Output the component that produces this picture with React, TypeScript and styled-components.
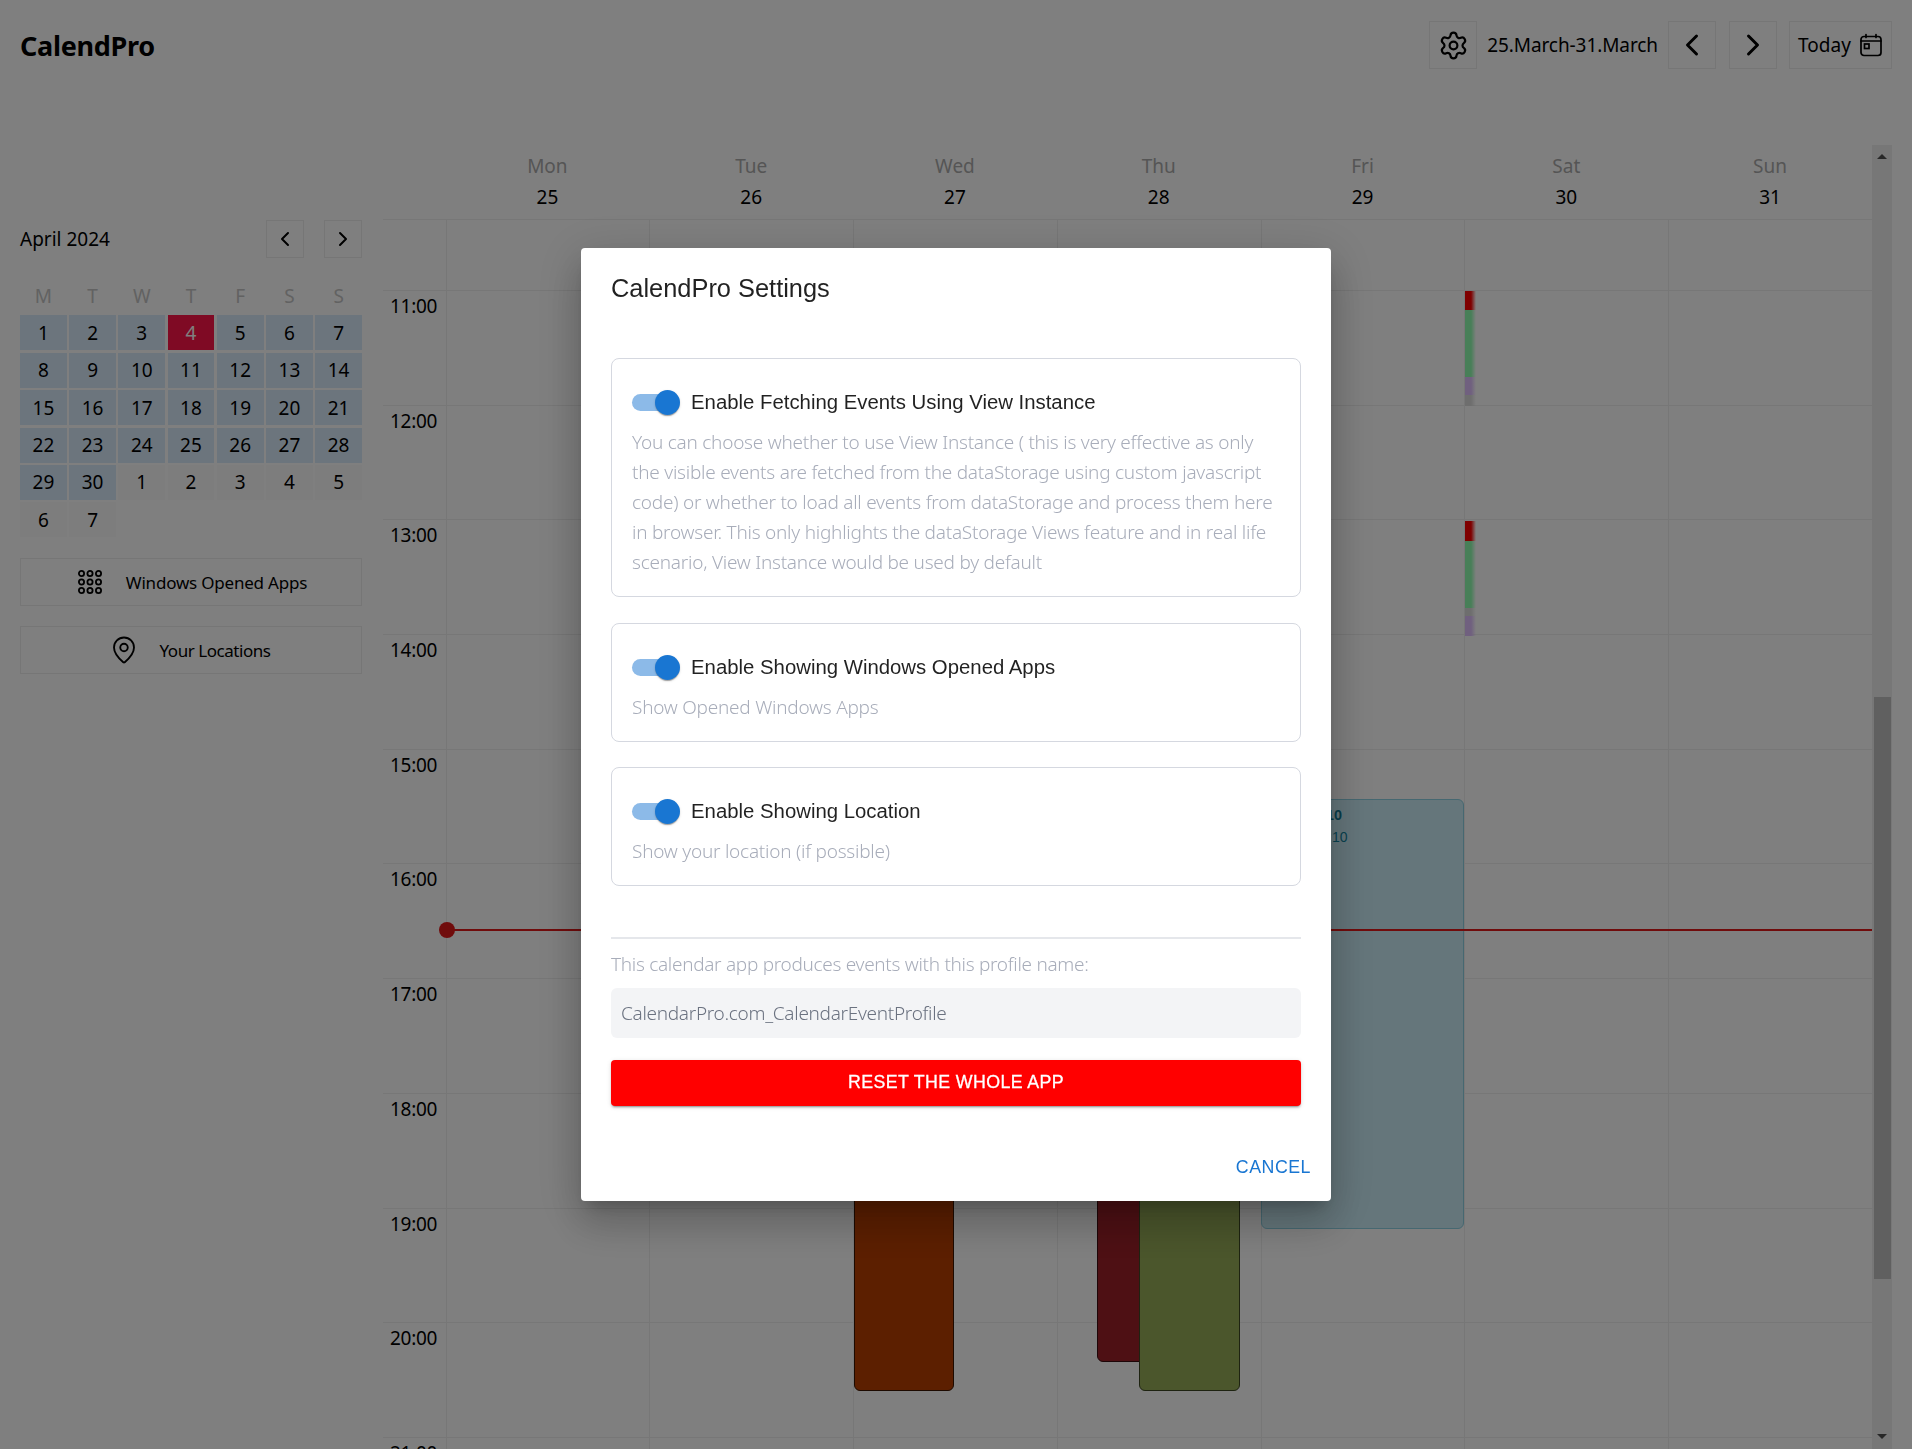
import React from 'react';
import styled, { createGlobalStyle } from 'styled-components';
import { ChevronLeft, ChevronRight, MapPin, Settings } from 'lucide-react';

const SEGOE = `'Noto Sans', 'Open Sans', sans-serif`;
const ARIAL = `'Liberation Sans', Arial, sans-serif`;

const GlobalStyle = createGlobalStyle`
  html, body {
    margin: 0;
    padding: 0;
    background: #fff;
  }
  * {
    box-sizing: border-box;
  }
`;

const Page = styled.div`
  width: 1912px;
  height: 1449px;
  overflow: hidden;
  background: #fff;
  color: #000;
  font-family: ${SEGOE};
`;

const Header = styled.header`
  display: flex;
  align-items: center;
  height: 145px;
  padding: 21px 20px 76px 20px;
`;

const Logo = styled.h1`
  flex: 1;
  margin: 0;
  font-size: 27px;
  font-weight: 700;
  letter-spacing: -0.3px;
`;

const IconButton = styled.button<{ $wide?: boolean }>`
  display: flex;
  align-items: center;
  justify-content: center;
  gap: 8px;
  width: ${({ $wide }) => ($wide ? '103px' : '48px')};
  height: 48px;
  margin-left: ${({ $wide }) => ($wide ? '12px' : '0')};
  padding: 0;
  border: 1px solid #ececec;
  background: transparent;
  color: #000;
  font-family: ${SEGOE};
  font-size: 19px;
`;

const NextButton = styled(IconButton)`
  margin-left: 13px;
`;

const RangeLabel = styled.span`
  margin: 0 10px;
  font-size: 19px;
  letter-spacing: -0.08px;
`;

const Main = styled.main`
  display: flex;
  height: 1304px;
  padding-right: 20px;
`;

const Sidebar = styled.aside`
  flex: 0 0 383px;
  padding: 75px 21px 0 20px;
`;

const MonthBar = styled.div`
  display: flex;
  align-items: center;
  height: 38px;
  font-size: 19px;
`;

const MonthName = styled.span`
  flex: 1;
`;

const MonthButton = styled.button`
  display: flex;
  align-items: center;
  justify-content: center;
  width: 38px;
  height: 38px;
  margin-left: 20px;
  padding: 0;
  border: 1px solid #ececec;
  background: transparent;
  color: #000;
`;

const MonthGrid = styled.div`
  display: grid;
  grid-template-columns: repeat(7, 1fr);
  grid-auto-rows: 35px;
  column-gap: 2.4px;
  row-gap: 2.4px;
  margin-top: 20px;
`;

const WeekdayCell = styled.div`
  display: flex;
  align-items: center;
  justify-content: center;
  color: #c4c4c4;
  font-size: 19px;
`;

const DayCell = styled.div<{ $kind: 'month' | 'today' | 'other' }>`
  display: flex;
  align-items: center;
  justify-content: center;
  font-size: 19px;
  background: ${({ $kind }) =>
    $kind === 'today' ? '#ff1448' : $kind === 'month' ? '#d8eafa' : '#fbfbfb'};
  color: ${({ $kind }) => ($kind === 'today' ? '#fff' : '#000')};
`;

const SideAction = styled.button<{ $gap: number; $padLeft: number; $padRight: number; $tracking: number }>`
  display: flex;
  align-items: center;
  justify-content: center;
  gap: ${({ $gap }) => $gap}px;
  width: 100%;
  height: 48px;
  padding: 0 ${({ $padRight }) => $padRight}px 0 ${({ $padLeft }) => $padLeft}px;
  border: 1px solid #ececec;
  background: transparent;
  color: #000;
  font-family: ${SEGOE};
  font-size: 17px;
  letter-spacing: ${({ $tracking }) => $tracking}px;
`;

const FirstAction = styled(SideAction)`
  margin-top: 21px;
`;

const SecondAction = styled(SideAction)`
  margin-top: 20px;
`;

const Calendar = styled.section`
  flex: 1;
  display: flex;
  flex-direction: column;
  min-width: 0;
`;

const WeekHead = styled.div`
  display: flex;
  height: 75px;
  padding-left: 62.5px;
  border-bottom: 1px solid #eee;
`;

const WeekHeadCell = styled.div`
  flex: 1;
  display: flex;
  flex-direction: column;
  align-items: center;
  padding-top: 6px;
  font-size: 19px;
  line-height: 31px;
`;

const WeekDayName = styled.span`
  color: #aaa;
`;

const Body = styled.div`
  position: relative;
  flex: 1;
  overflow: hidden;
`;

const HourRow = styled.div<{ $height: number }>`
  display: flex;
  height: ${({ $height }) => $height}px;
  border-bottom: 1px solid #eee;
`;

const HourLabel = styled.div`
  flex: 0 0 62.5px;
  padding: 0 0 0 7px;
  font-size: 19px;
  line-height: 30px;
  letter-spacing: -0.3px;
`;

const HourCell = styled.div`
  flex: 1;
  border-left: 1px solid #eee;
`;

const TrackBar = styled.div<{ $top: number; $height: number; $color: string }>`
  position: absolute;
  left: 1082px;
  top: ${({ $top }) => $top}px;
  width: 11px;
  height: ${({ $height }) => $height}px;
  background: linear-gradient(to right, ${({ $color }) => $color} 55%, transparent);
`;

const EventBlock = styled.div<{
  $left: number;
  $width: number;
  $top: number;
  $bottom: number;
  $color: string;
  $edge: string;
}>`
  position: absolute;
  left: ${({ $left }) => $left}px;
  top: ${({ $top }) => $top}px;
  width: ${({ $width }) => $width}px;
  height: ${({ $bottom, $top }) => $bottom - $top}px;
  background: ${({ $color }) => $color};
  border: 1px solid ${({ $edge }) => $edge};
  border-radius: 6px;
`;

const EventTitle = styled.div`
  position: absolute;
  left: 64px;
  top: 7px;
  color: #0f7a94;
  font-family: ${ARIAL};
  font-size: 14.4px;
  font-weight: 700;
`;

const EventTime = styled.div`
  position: absolute;
  left: 66px;
  top: 29px;
  color: #12849f;
  font-family: ${ARIAL};
  font-size: 14px;
`;

const NowLine = styled.div`
  position: absolute;
  left: 64px;
  right: 0;
  top: 709px;
  height: 2px;
  background: #e01818;
`;

const NowDot = styled.div`
  position: absolute;
  left: -8px;
  top: -7px;
  width: 16px;
  height: 16px;
  border-radius: 50%;
  background: #e01818;
`;

const ScrollTrack = styled.div`
  flex: 0 0 20px;
  display: flex;
  flex-direction: column;
  align-items: center;
  background: #eee;
`;

const ScrollArrow = styled.div<{ $down?: boolean }>`
  flex: none;
  width: 0;
  height: 0;
  border-left: 5px solid transparent;
  border-right: 5px solid transparent;
  ${({ $down }) =>
    $down
      ? 'border-top: 5px solid #505050; margin-top: 155px;'
      : 'border-bottom: 5px solid #505050; margin-top: 9px;'}
`;

const ScrollThumb = styled.div`
  flex: none;
  width: 17px;
  height: 582px;
  margin-top: 538px;
  background: #c1c1c1;
`;

const Backdrop = styled.div`
  position: fixed;
  inset: 0;
  display: flex;
  align-items: center;
  justify-content: center;
  background: rgba(0, 0, 0, 0.5);
`;

const Dialog = styled.div`
  width: 750px;
  height: 953px;
  background: #fff;
  border-radius: 4px;
  box-shadow: 0 11px 15px -7px rgba(0, 0, 0, 0.2), 0 24px 38px 3px rgba(0, 0, 0, 0.14),
    0 9px 46px 8px rgba(0, 0, 0, 0.12);
  font-family: ${ARIAL};
`;

const DialogTitle = styled.h2`
  height: 110px;
  margin: 0;
  padding: 24px 30px 0;
  color: rgba(0, 0, 0, 0.87);
  font-size: 25.4px;
  font-weight: 400;
  line-height: 32px;
`;

const DialogBody = styled.div`
  display: flex;
  flex-direction: column;
  padding: 0 30px;
`;

const OptionCard = styled.div`
  margin-bottom: 25.5px;
  padding: 31px 20px 19px;
  border: 1px solid #d5d8e0;
  border-radius: 8px;
`;

const OptionRow = styled.div`
  display: flex;
  align-items: center;
  gap: 11px;
  height: 25px;
  color: rgba(0, 0, 0, 0.87);
  font-size: 20.35px;
`;

const SwitchRoot = styled.span`
  position: relative;
  display: block;
  flex: none;
  width: 48px;
  height: 25px;
`;

const SwitchTrack = styled.span`
  position: absolute;
  left: 0;
  right: 6px;
  top: 4px;
  height: 17px;
  border-radius: 9px;
  background: #8cbae8;
`;

const SwitchThumb = styled.span`
  position: absolute;
  right: 0;
  top: 0;
  width: 25px;
  height: 25px;
  border-radius: 50%;
  background: #1976d2;
  box-shadow: 0 2px 1px -1px rgba(0, 0, 0, 0.2), 0 1px 1px rgba(0, 0, 0, 0.14),
    0 1px 3px rgba(0, 0, 0, 0.12);
`;

const OptionText = styled.div`
  margin-top: 12px;
  color: #a8adba;
  font-family: ${SEGOE};
  font-size: 19px;
  font-weight: 300;
  line-height: 30px;
  letter-spacing: -0.24px;
`;

const TextLine = styled.div`
  white-space: nowrap;
`;

const Divider = styled.hr`
  width: 100%;
  height: 2px;
  margin: 25px 0 10px;
  border: 0;
  background: #e5e7eb;
`;

const ProfileLabel = styled.div`
  color: #a8adba;
  font-family: ${SEGOE};
  font-size: 19px;
  font-weight: 300;
  line-height: 30px;
  letter-spacing: -0.3px;
`;

const ProfileField = styled.div`
  display: flex;
  align-items: center;
  height: 50px;
  margin-top: 9px;
  padding: 0 10px;
  border-radius: 6px;
  background: #f3f4f6;
  color: #6b7280;
  font-family: ${SEGOE};
  font-size: 19px;
  font-weight: 300;
  letter-spacing: -0.3px;
`;

const ResetButton = styled.button`
  height: 46px;
  margin-top: 22px;
  border: 0;
  border-radius: 4px;
  background: #f00;
  color: #fff;
  font-family: ${ARIAL};
  font-size: 17.8px;
  font-weight: 400;
  letter-spacing: 0.38px;
  -webkit-text-stroke: 0.3px #fff;
  box-shadow: 0 3px 1px -2px rgba(0, 0, 0, 0.2), 0 2px 2px rgba(0, 0, 0, 0.14),
    0 1px 5px rgba(0, 0, 0, 0.12);
`;

const DialogActions = styled.div`
  display: flex;
  justify-content: flex-end;
  padding: 45px 20px 0 0;
`;

const CancelButton = styled.button`
  padding: 0;
  border: 0;
  background: transparent;
  color: #1976d2;
  font-family: ${ARIAL};
  font-size: 17.8px;
  letter-spacing: 0.5px;
  line-height: 32px;
`;

const CalendarGlyph = () => (
  <svg width="24" height="24" viewBox="0 0 24 24" fill="none" stroke="#000" strokeWidth="1.7">
    <rect x="2" y="3.5" width="20" height="19" rx="3" />
    <path d="M2 8h20M7 1.5v3M17 1.5v3" strokeLinecap="round" />
    <rect x="5.5" y="11" width="4.5" height="4.5" />
  </svg>
);

const AppsGlyph = () => (
  <svg width="24" height="24" viewBox="0 0 24 24" fill="none" stroke="#000" strokeWidth="1.8">
    {[3.5, 12, 20.5].map((y) =>
      [3.5, 12, 20.5].map((x) => <circle key={`${x}-${y}`} cx={x} cy={y} r="2.6" />),
    )}
  </svg>
);

const weekHead = [
  { name: 'Mon', day: 25 },
  { name: 'Tue', day: 26 },
  { name: 'Wed', day: 27 },
  { name: 'Thu', day: 28 },
  { name: 'Fri', day: 29 },
  { name: 'Sat', day: 30 },
  { name: 'Sun', day: 31 },
];

const weekdays = ['M', 'T', 'W', 'T', 'F', 'S', 'S'];
const aprilDays = Array.from({ length: 30 }, (_, i) => i + 1);
const mayDays = [1, 2, 3, 4, 5, 6, 7];
const hours = ['11:00', '12:00', '13:00', '14:00', '15:00', '16:00', '17:00', '18:00', '19:00', '20:00', '21:00'];

const trackBars = [
  { top: 71, height: 19, color: '#ff0000' },
  { top: 90, height: 67, color: '#90ffb0' },
  { top: 157, height: 18, color: '#e0c0ff' },
  { top: 175, height: 11, color: '#dddddd' },
  { top: 301, height: 20, color: '#ff0000' },
  { top: 321, height: 67, color: '#90ffb0' },
  { top: 388, height: 8, color: '#dddddd' },
  { top: 396, height: 20, color: '#e0c0ff' },
];

const options = [
  {
    title: 'Enable Fetching Events Using View Instance',
    lines: [
      'You can choose whether to use View Instance ( this is very effective as only',
      'the visible events are fetched from the dataStorage using custom javascript',
      'code) or whether to load all events from dataStorage and process them here',
      'in browser. This only highlights the dataStorage Views feature and in real life',
      'scenario, View Instance would be used by default',
    ],
  },
  { title: 'Enable Showing Windows Opened Apps', lines: ['Show Opened Windows Apps'] },
  { title: 'Enable Showing Location', lines: ['Show your location (if possible)'] },
];

const App: React.FC = () => {
  return (
    <Page>
      <GlobalStyle />
      <Header>
        <Logo>CalendPro</Logo>
        <IconButton>
          <Settings size={31} strokeWidth={1.7} />
        </IconButton>
        <RangeLabel>25.March-31.March</RangeLabel>
        <IconButton>
          <ChevronLeft size={36} strokeWidth={2} />
        </IconButton>
        <NextButton>
          <ChevronRight size={36} strokeWidth={2} />
        </NextButton>
        <IconButton $wide>
          Today
          <CalendarGlyph />
        </IconButton>
      </Header>
      <Main>
        <Sidebar>
          <MonthBar>
            <MonthName>April 2024</MonthName>
            <MonthButton>
              <ChevronLeft size={24} strokeWidth={2} />
            </MonthButton>
            <MonthButton>
              <ChevronRight size={24} strokeWidth={2} />
            </MonthButton>
          </MonthBar>
          <MonthGrid>
            {weekdays.map((d, i) => (
              <WeekdayCell key={i}>{d}</WeekdayCell>
            ))}
            {aprilDays.map((d) => (
              <DayCell key={d} $kind={d === 4 ? 'today' : 'month'}>
                {d}
              </DayCell>
            ))}
            {mayDays.map((d) => (
              <DayCell key={`may-${d}`} $kind="other">
                {d}
              </DayCell>
            ))}
          </MonthGrid>
          <FirstAction $gap={24} $padLeft={3} $padRight={0} $tracking={-0.2}>
            <AppsGlyph />
            Windows Opened Apps
          </FirstAction>
          <SecondAction $gap={20} $padLeft={0} $padRight={2} $tracking={-0.45}>
            <MapPin size={30} strokeWidth={1.5} />
            Your Locations
          </SecondAction>
        </Sidebar>
        <Calendar>
          <WeekHead>
            {weekHead.map((d) => (
              <WeekHeadCell key={d.name}>
                <WeekDayName>{d.name}</WeekDayName>
                <span>{d.day}</span>
              </WeekHeadCell>
            ))}
          </WeekHead>
          <Body>
            <HourRow $height={71}>
              <HourLabel />
              {weekHead.map((d) => (
                <HourCell key={d.name} />
              ))}
            </HourRow>
            {hours.map((h) => (
              <HourRow key={h} $height={114.7}>
                <HourLabel>{h}</HourLabel>
                {weekHead.map((d) => (
                  <HourCell key={d.name} />
                ))}
              </HourRow>
            ))}
            {trackBars.map((b) => (
              <TrackBar key={b.top} $top={b.top} $height={b.height} $color={b.color} />
            ))}
            <EventBlock $left={471} $width={100} $top={780} $bottom={1171} $color="#b83e00" $edge="#3a1400" />
            <EventBlock $left={714} $width={60} $top={780} $bottom={1142} $color="#9c2028" $edge="#3a0c10" />
            <EventBlock $left={756} $width={101} $top={780} $bottom={1171} $color="#96ac58" $edge="#3c4722" />
            <EventBlock $left={878} $width={203} $top={579} $bottom={1009} $color="#caecf6" $edge="#8dd0e2">
              <EventTitle>10</EventTitle>
              <EventTime>:10</EventTime>
            </EventBlock>
            <NowLine>
              <NowDot />
            </NowLine>
          </Body>
        </Calendar>
        <ScrollTrack>
          <ScrollArrow />
          <ScrollThumb />
          <ScrollArrow $down />
        </ScrollTrack>
      </Main>
      <Backdrop>
        <Dialog>
          <DialogTitle>CalendPro Settings</DialogTitle>
          <DialogBody>
            {options.map((o) => (
              <OptionCard key={o.title}>
                <OptionRow>
                  <SwitchRoot>
                    <SwitchTrack />
                    <SwitchThumb />
                  </SwitchRoot>
                  {o.title}
                </OptionRow>
                <OptionText>
                  {o.lines.map((l) => (
                    <TextLine key={l}>{l}</TextLine>
                  ))}
                </OptionText>
              </OptionCard>
            ))}
            <Divider />
            <ProfileLabel>This calendar app produces events with this profile name:</ProfileLabel>
            <ProfileField>CalendarPro.com_CalendarEventProfile</ProfileField>
            <ResetButton>RESET THE WHOLE APP</ResetButton>
          </DialogBody>
          <DialogActions>
            <CancelButton>CANCEL</CancelButton>
          </DialogActions>
        </Dialog>
      </Backdrop>
    </Page>
  );
};

export default App;
